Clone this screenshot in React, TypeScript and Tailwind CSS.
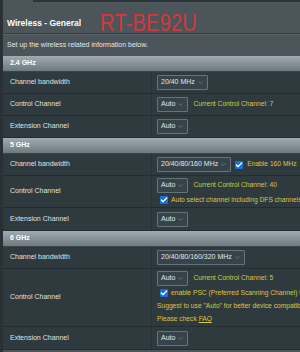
import { ChevronDown, Check } from "lucide-react"

function Select({ label }: { label: string }) {
  return (
    <div className="flex items-center gap-[2px] h-[15px] px-[3px] border border-[#66747a] bg-[#36434a] text-[7px] text-[#e2e6e8] rounded-[1px] whitespace-nowrap shrink-0">
      <span>{label}</span>
      <ChevronDown size={7} strokeWidth={1.5} className="text-[#aab4b8] shrink-0" />
    </div>
  )
}

function Box() {
  return (
    <span className="inline-flex items-center justify-center w-[8px] h-[8px] bg-[#1a6fe0] rounded-[1px] shrink-0">
      <Check size={8} strokeWidth={4} className="text-white" />
    </span>
  )
}

function Row({
  label,
  height,
  children,
}: {
  label: string
  height: string
  children: React.ReactNode
}) {
  return (
    <div className={`flex ${height} border-b border-[#232c30]`}>
      <div className="w-[149px] shrink-0 flex items-center pl-[7px] text-[7px] text-[#dfe3e5] border-r border-[#273034]">
        {label}
      </div>
      <div className="flex-1 flex flex-col items-start justify-center pl-[5px]">{children}</div>
    </div>
  )
}

function Header({ title }: { title: string }) {
  return (
    <div className="h-[16px] flex items-center pl-[7px] bg-gradient-to-b from-[#9fabb1] to-[#6e7a80] text-[7px] font-bold text-white border-b border-[#3a4448]">
      {title}
    </div>
  )
}

const yellow = "text-[6.7px] text-[#d8c646] whitespace-nowrap"

export default function App() {
  return (
    <div
      className="w-[300px] h-[352px] overflow-hidden bg-[#4c5559] border-l-[3px] border-[#2a3134]"
      style={{ fontFamily: '"Liberation Sans", Arial, sans-serif' }}
    >
      <div className="h-[2px] ml-[30px] bg-[#2d3437]" />
      <div className="flex items-end h-[31px] pl-[4px] pb-[1px] gap-[19px]">
        <span className="text-[8.5px] font-bold text-white mb-[2px]">Wireless - General</span>
        <span className="text-[20px] leading-none text-[#d7353d] scale-y-[1.2] origin-bottom translate-y-[3px] tracking-[0.2px]">
          RT-BE92U
        </span>
      </div>
      <div className="h-[1px] bg-[#363e41]" />
      <div className="h-[1px] bg-[#5a6367]" />
      <div className="h-[21px] flex items-center pl-[4px] text-[7px] text-[#e3e6e7]">
        Set up the wireless related information below.
      </div>

      <div className="w-[330px] bg-[#2f3a3f]">
        <Header title="2.4 GHz" />
        <Row label="Channel bandwidth" height="h-[22px]">
          <Select label="20/40 MHz" />
        </Row>
        <Row label="Control Channel" height="h-[22px]">
          <div className="flex items-center gap-[5px]">
            <Select label="Auto" />
            <span className={yellow}>Current Control Channel: 7</span>
          </div>
        </Row>
        <Row label="Extension Channel" height="h-[22px]">
          <Select label="Auto" />
        </Row>

        <Header title="5 GHz" />
        <Row label="Channel bandwidth" height="h-[22px]">
          <div className="flex items-center gap-[4px]">
            <Select label="20/40/80/160 MHz" />
            <Box />
            <span className={yellow}>Enable 160 MHz</span>
          </div>
        </Row>
        <Row label="Control Channel" height="h-[32px]">
          <div className="flex items-center gap-[5px]">
            <Select label="Auto" />
            <span className={yellow}>Current Control Channel: 40</span>
          </div>
          <div className="flex items-center gap-[3px] pl-[3px] mt-[2px]">
            <Box />
            <span className={yellow}>Auto select channel including DFS channels</span>
          </div>
        </Row>
        <Row label="Extension Channel" height="h-[23px]">
          <Select label="Auto" />
        </Row>

        <Header title="6 GHz" />
        <Row label="Channel bandwidth" height="h-[22px]">
          <Select label="20/40/80/160/320 MHz" />
        </Row>
        <Row label="Control Channel" height="h-[58px]">
          <div className="flex items-center gap-[5px]">
            <Select label="Auto" />
            <span className={yellow}>Current Control Channel: 5</span>
          </div>
          <div className="flex items-center gap-[3px] pl-[3px] mt-[2px]">
            <Box />
            <span className={yellow}>enable PSC (Preferred Scanning Channel) to</span>
          </div>
          <div className={`${yellow} mt-[3px]`}>
            Suggest to use "Auto" for better device compatibility.
          </div>
          <div className={`${yellow} mt-[3px]`}>
            Please check <span className="underline">FAQ</span>
          </div>
        </Row>
        <Row label="Extension Channel" height="h-[23px]">
          <Select label="Auto" />
        </Row>
      </div>
    </div>
  )
}
